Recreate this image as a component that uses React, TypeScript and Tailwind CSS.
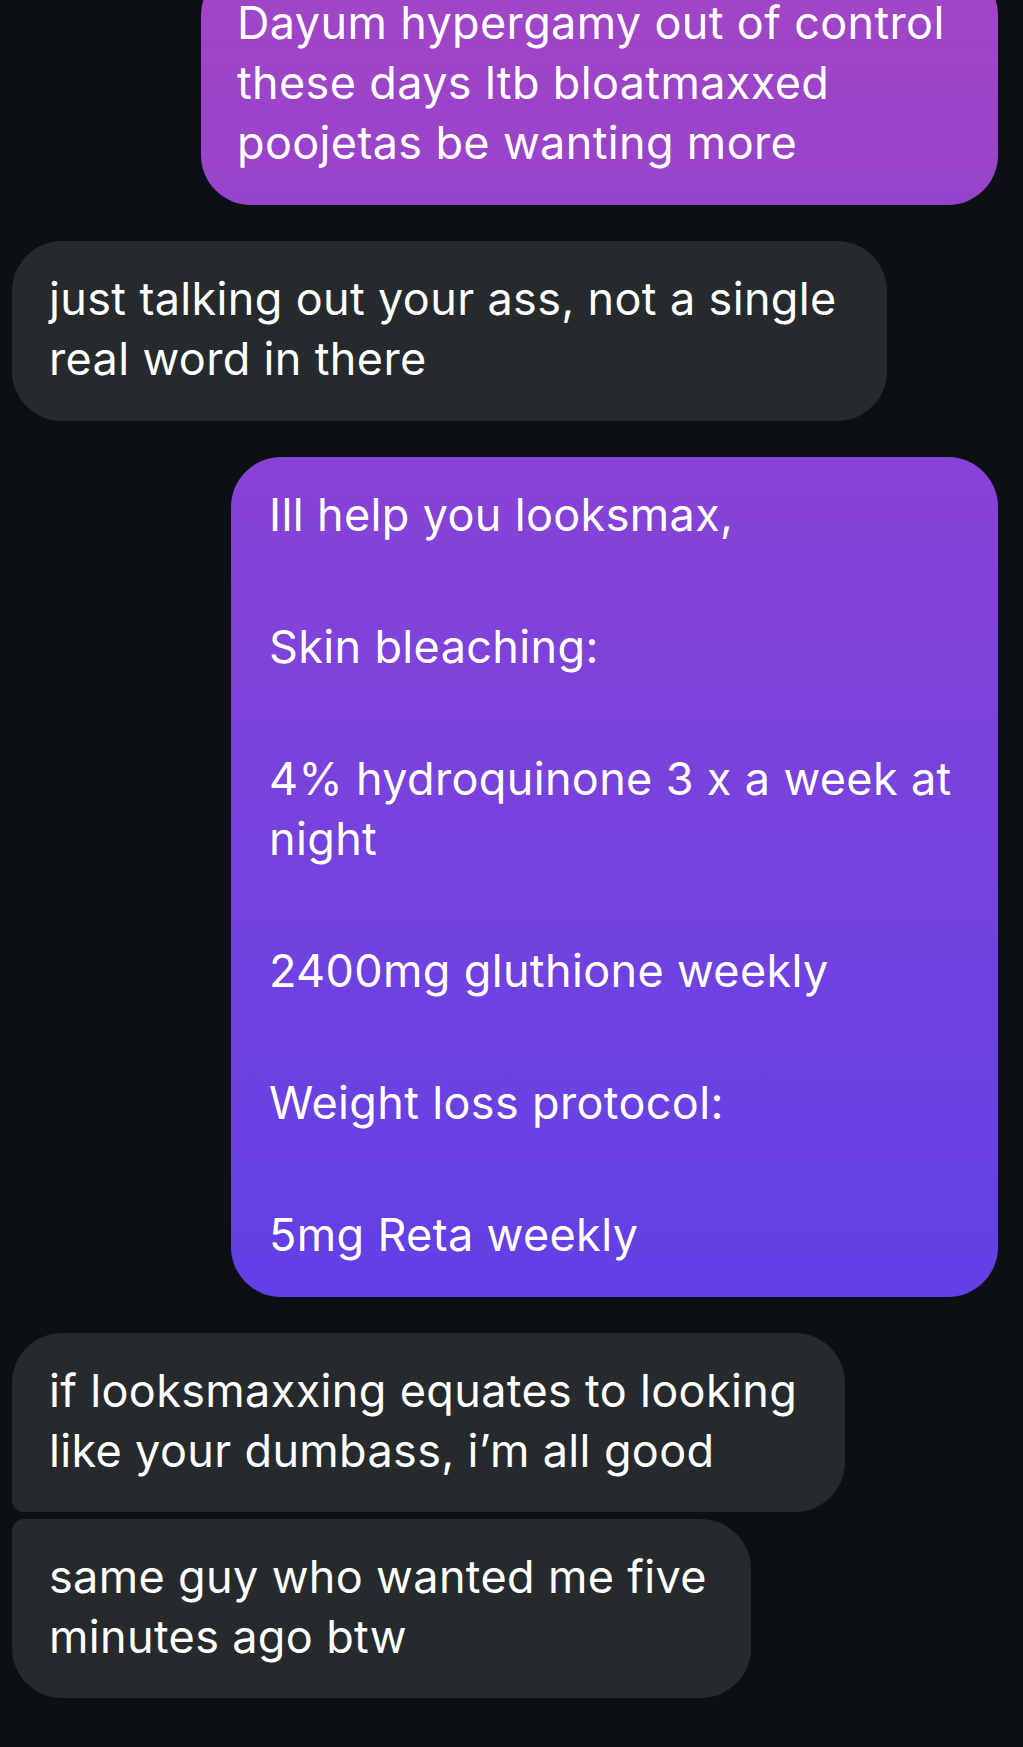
import React from "react";

const font = { fontFamily: "Inter, 'Noto Sans', sans-serif" };

function Lines({ lines }: { lines: string[] }) {
  return (
    <>
      {lines.map((l, i) => (
        <div key={i} className="whitespace-nowrap">
          {l}
        </div>
      ))}
    </>
  );
}

export default function App() {
  const purple =
    "bg-[linear-gradient(180deg,#a045c6_0px,#9b44c9_120px,#8842d6_460px,#7542de_860px,#6240e5_1290px,#5540ea_1747px)] bg-fixed";
  const gray = "bg-[#262a2d]";
  return (
    <div
      className="w-[1023px] h-[1747px] overflow-hidden bg-[#0c1014] text-white text-[45px] leading-[60px] tracking-[0.35px] antialiased"
      style={font}
    >
      <div className="flex flex-col mt-[-35px]">
        <div className="flex justify-end pr-[25px]">
          <div className={`${purple} w-[797px] rounded-[50px] pl-[36px] pt-[28px] pb-[32px]`}>
            <Lines
              lines={[
                "Dayum hypergamy out of control",
                "these days ltb bloatmaxxed",
                "poojetas be wanting more",
              ]}
            />
          </div>
        </div>

        <div className="flex justify-start pl-[12px] mt-[36px]">
          <div className={`${gray} w-[875px] rounded-[50px] pl-[37px] pt-[28px] pb-[32px]`}>
            <Lines lines={["just talking out your ass, not a single", "real word in there"]} />
          </div>
        </div>

        <div className="flex justify-end pr-[25px] mt-[36px]">
          <div
            className={`${purple} w-[767px] rounded-[50px] pl-[38px] pt-[28px] pb-[32px] flex flex-col gap-[72px]`}
          >
            <Lines lines={["Ill help you looksmax,"]} />
            <Lines lines={["Skin bleaching:"]} />
            <div>
              <Lines lines={["4% hydroquinone 3 x a week at", "night"]} />
            </div>
            <Lines lines={["2400mg gluthione weekly"]} />
            <Lines lines={["Weight loss protocol:"]} />
            <Lines lines={["5mg Reta weekly"]} />
          </div>
        </div>

        <div className="flex justify-start pl-[12px] mt-[36px]">
          <div
            className={`${gray} w-[833px] rounded-[50px] rounded-bl-[12px] pl-[37px] pt-[28px] pb-[31px]`}
          >
            <Lines lines={["if looksmaxxing equates to looking", "like your dumbass, i’m all good"]} />
          </div>
        </div>

        <div className="flex justify-start pl-[12px] mt-[7px]">
          <div
            className={`${gray} w-[739px] rounded-[50px] rounded-tl-[12px] pl-[37px] pt-[28px] pb-[31px]`}
          >
            <Lines lines={["same guy who wanted me five", "minutes ago btw"]} />
          </div>
        </div>
      </div>
    </div>
  );
}
